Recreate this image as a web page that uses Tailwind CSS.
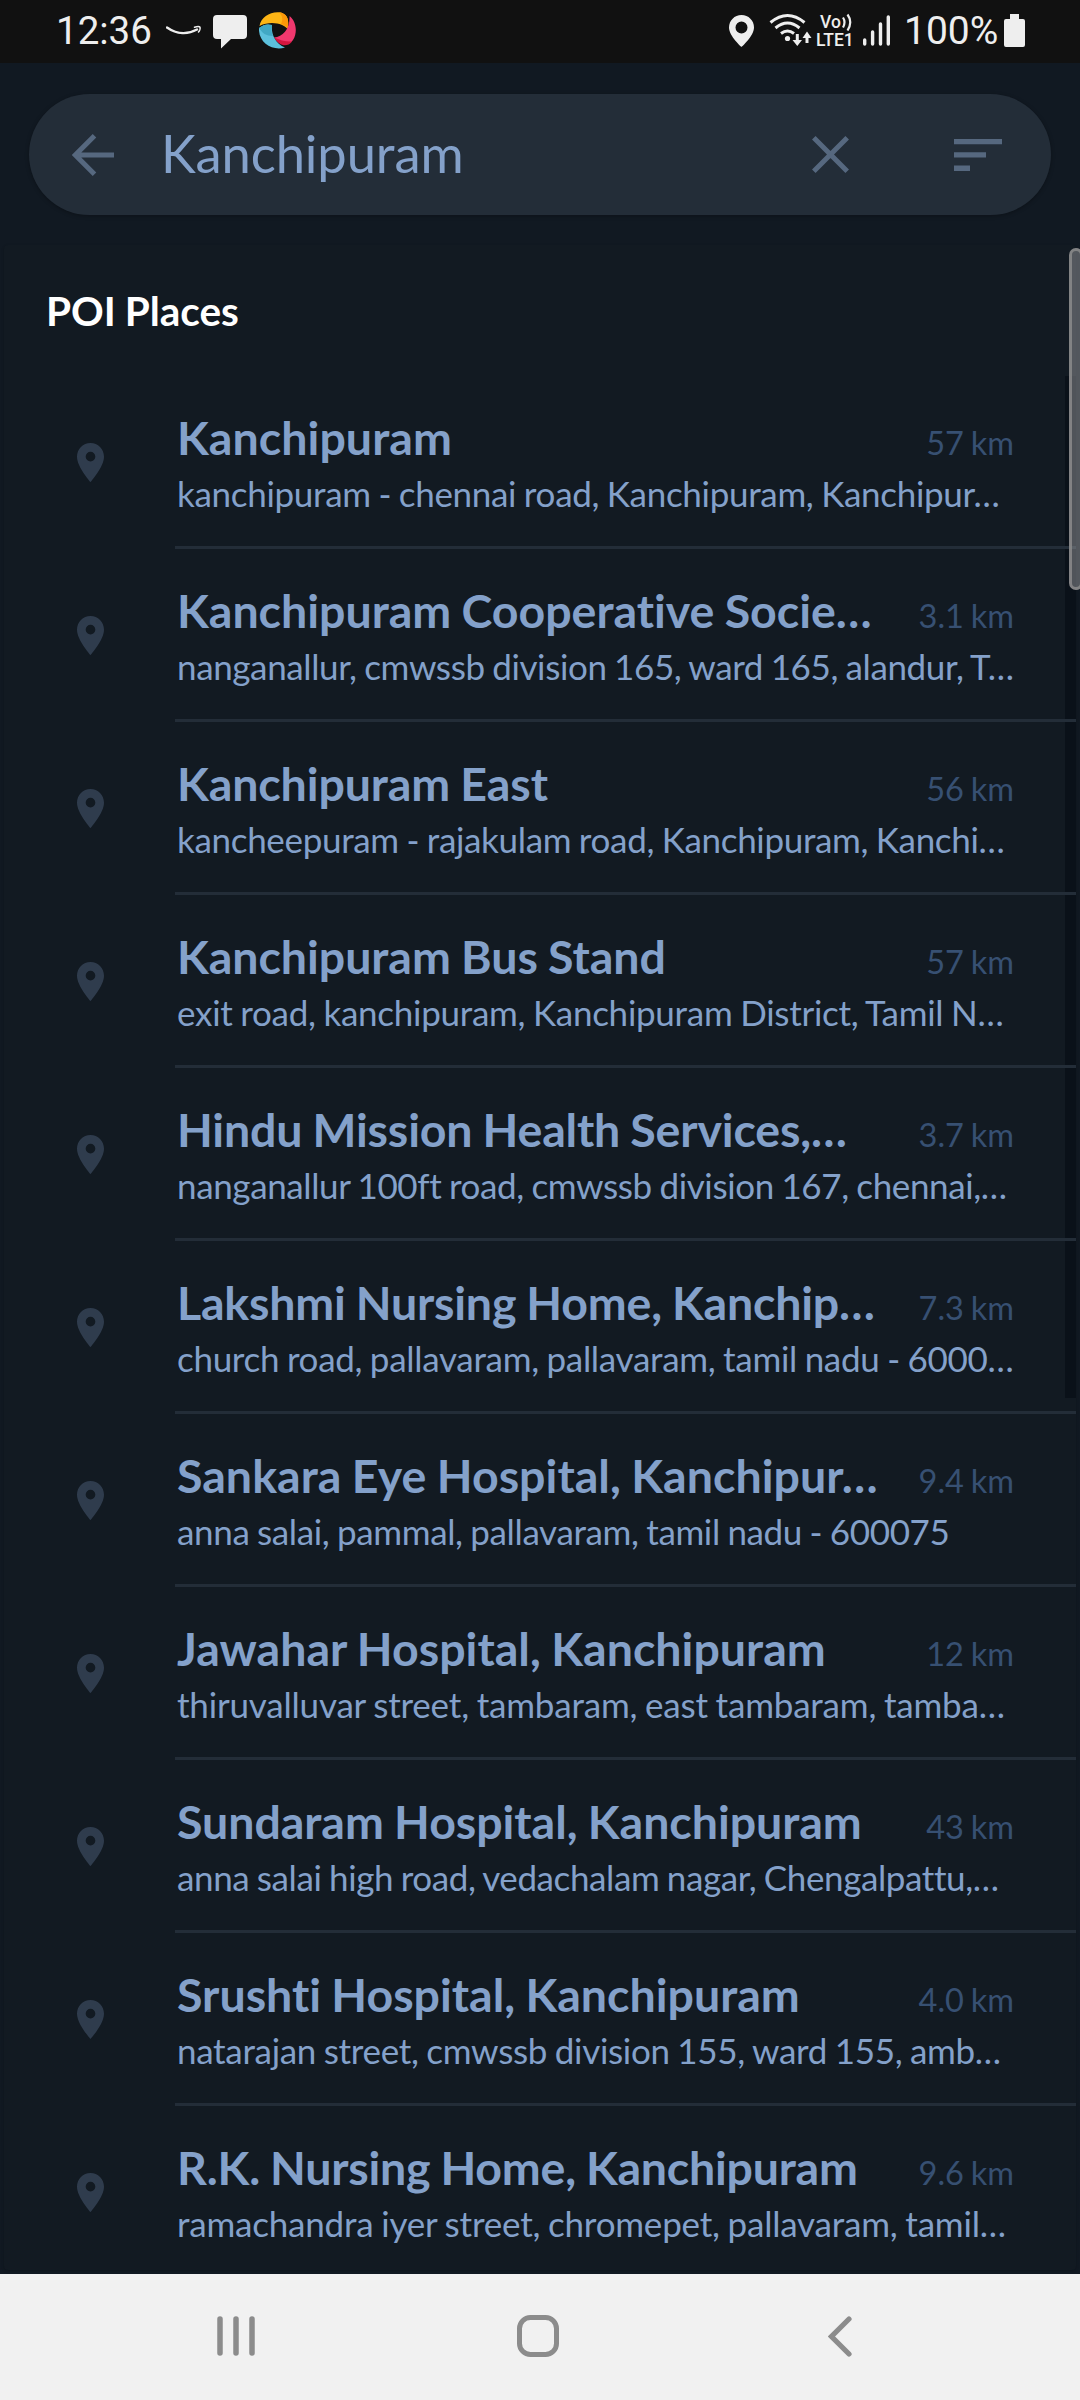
<!DOCTYPE html>
<html lang="en">
<head>
<meta charset="utf-8">
<title>Search places</title>
<script src="https://cdn.jsdelivr.net/npm/@tailwindcss/browser@4"></script>
</head>
<body class="w-[1080px] h-[2400px] overflow-hidden flex flex-col bg-[#111922] font-['Lato',sans-serif] [font-variant-ligatures:none]">

<!-- Status bar -->
<header class="h-[63px] shrink-0 bg-[#111111] text-[#eeeeee] flex items-center justify-between pl-[56px] pr-[55px] font-['Roboto',sans-serif]">
  <div class="flex items-center h-full">
    <span class="w-[110px] text-[38.5px] leading-none whitespace-nowrap">12:36</span>
    <svg class="w-[36px] h-[14px] mb-[2px]" viewBox="166 24 36 14" fill="none" stroke="#eeeeee"><path d="M167 27.5C177 34.5 188 34.5 197 29.5" stroke-width="2.4" stroke-linecap="round"/><path d="M194.500 27.200C197 26.500 199.500 26.500 200 27.200C200.500 28.500 199.500 31 198.500 32" stroke-width="1.500" stroke-linecap="round"/></svg>
    <svg class="w-[34px] h-[34px] ml-[11px]" viewBox="0 0 34 34" fill="#eeeeee"><path d="M4 0H30Q34 0 34 4V20Q34 24 30 24H18L8 33.500V24H4Q0 24 0 20V4Q0 0 4 0Z"/></svg>
    <svg class="w-[38px] h-[38px] ml-[12px] mb-[2px]" viewBox="259 12 38 38"><path d="M259.500 26C261 17 270 11.500 279 12.200C286 13 290 18 287.500 29C284 24.500 272 20 259.500 26Z" fill="#fdb515"/><path d="M279 12.200C286 13 290 18 287.500 29C286 26 284 25 281 24C283 20 283 16 279 12.200Z" fill="#fb9708"/><path d="M289.500 16C296 21 298 32 293 40C288 47 281 45 274 37.500C283 37 290 29 289.500 16Z" fill="#f0386e"/><path d="M274 37.500C280 40 286 42 292 41.500C287 48 279 46 274 37.500Z" fill="#d4163f"/><path d="M259 28C264 24 268 24 272 25C271 34 275 43 285 47.500C273 51.500 258 43 259 28Z" fill="#5cc0dc"/><path d="M259 28C264 24 268 24 272 25C271 30 272 34 273 36C266 36 262 33 259 28Z" fill="#41a8c4"/></svg>
  </div>
  <div class="flex items-center h-full">
    <svg class="w-[25px] h-[32px] mb-[2px]" viewBox="0 0 25 32" fill="#eeeeee" fill-rule="evenodd"><path d="M12.500 0C5.500 0 0 5.500 0 12.500C0 21 12.500 32 12.500 32S25 21 25 12.500C25 5.500 19.500 0 12.500 0ZM12.500 6.500A6 6 0 1 1 12.500 18.500A6 6 0 1 1 12.500 6.500Z"/></svg>
    <svg class="w-[43px] h-[34px] ml-[15px] mb-[4px]" viewBox="768 12 43 34" fill="none" stroke="#eeeeee" stroke-width="3"><path d="M769.500 21.500Q786.500 7.500 803.500 21.500"/><path d="M774.500 27Q786.500 17 798.500 27"/><path d="M780 32.500Q786.500 27.500 793 32.500"/><circle cx="786.500" cy="37.500" r="2.600" fill="#eeeeee" stroke="none"/><path d="M796.300 33V42M806 42V34"/><path d="M791.500 39H801L796.300 45Z M801.500 37H810.500L806 30.500Z" fill="#eeeeee" stroke="none"/></svg>
    <div class="w-[40px] ml-[4px] mb-[1px] flex flex-col text-[17.5px] leading-[18px] font-medium">
      <span class="flex h-[18px] pl-[4px]">Vo<svg class="w-[12px] h-[18px]" viewBox="0 0 12 18" fill="none" stroke="#eeeeee" stroke-width="2.200"><path d="M2 4.500Q5 9 2 14.500M6.500 1.500Q12 9 6.500 17.500"/></svg></span>
      <span class="whitespace-nowrap">LTE1</span>
    </div>
    <svg class="w-[27px] h-[31px] ml-[7px] mb-[2px]" viewBox="0 0 27 31" stroke="#eeeeee" stroke-width="3.400" stroke-linecap="round"><path d="M1.700 25V29M9.600 17V29M17.500 9V29M25.300 2V29"/></svg>
    <span class="text-[39px] leading-none ml-[14px] w-[95px] whitespace-nowrap">100%</span>
    <svg class="w-[21px] h-[33px] ml-[5px] mb-[2px]" viewBox="0 0 21 33" fill="#eeeeee"><path d="M6 0H15V5H19Q21 5 21 7V31Q21 33 19 33H2Q0 33 0 31V7Q0 5 2 5H6Z"/></svg>
  </div>
</header>

<!-- Search field -->
<div class="mt-[31px] mx-[29px] h-[121px] shrink-0 rounded-full bg-[#232d38] shadow-[0_1px_4px_rgba(0,0,0,0.3)] flex items-center pl-[43px] pr-[49px]">
  <svg class="w-[42px] h-[42px]" viewBox="0 0 42 42" fill="none" stroke="#56687f" stroke-width="5"><path d="M42 21H4M22.500 1.800L3.300 21L22.500 40.200"/></svg>
  <span class="ml-[47px] flex-1 pb-[3px] text-[52.5px] leading-[64px] tracking-[-0.1px] text-[#84a1ca]">Kanchipuram</span>
  <svg class="w-[37px] h-[37px]" viewBox="0 0 37 37" stroke="#56687f" stroke-width="5"><path d="M1.800 1.800L35.200 35.200M35.200 1.800L1.800 35.200"/></svg>
  <svg class="w-[48px] h-[32px] ml-[105px]" viewBox="0 0 48 32" fill="#56687f"><path d="M0 0H48V5.300H0ZM0 13.300H32V18.600H0ZM0 26.600H16V32H0Z"/></svg>
</div>

<!-- Results -->
<main class="relative mt-[30px] mx-1 h-[2025px] shrink-0 rounded-[4px] bg-[#121a22] shadow-[0_1px_3px_rgba(0,0,0,0.2)]">
  <div class="absolute right-0 top-[131px] w-[11px] h-[1022px] bg-[#0a1119]"></div>
  <h1 class="h-[131px] pl-[42px] pt-[41px] text-[40.5px] leading-[49px] [word-spacing:-1px] font-bold text-white">POI Places</h1>
  <ul id="results" class="relative"></ul>
  <div class="absolute -right-[7px] top-[3px] w-[14px] h-[342px] rounded-[7px] border-[3px] border-[#888888]/90 bg-[#8b8d90]/55"></div>
</main>

<!-- Navigation bar -->
<nav class="mt-auto h-[126px] shrink-0 bg-[#f1f1f1] relative z-10 flex items-center pl-[217px] pr-[228px] pb-[2px] justify-between">
  <svg class="w-[38px] h-[40px]" viewBox="0 0 38 40" stroke="#8c8c8c" stroke-width="5.500" stroke-linecap="round"><path d="M3 3V37M19 3V37M35 3V37"/></svg>
  <svg class="w-[42px] h-[42px] ml-[-7px]" viewBox="0 0 42 42" fill="none" stroke="#8c8c8c" stroke-width="5"><rect x="2.500" y="2.500" width="37" height="37" rx="11"/></svg>
  <svg class="w-[24px] h-[41px]" viewBox="0 0 24 41" fill="none" stroke="#8c8c8c" stroke-width="5.200" stroke-linecap="round"><path d="M21 3L3.500 20.500L21 38"/></svg>
</nav>

<script>
// name, name width, distance, address, address width
const places = [
  ["Kanchipuram", 275, "57 km", "kanchipuram - chennai road, Kanchipuram, Kanchipur…", 823],
  ["Kanchipuram Cooperative Socie…", 695, "3.1 km", "nanganallur, cmwssb division 165, ward 165, alandur, T…", 839],
  ["Kanchipuram East", 371, "56 km", "kancheepuram - rajakulam road, Kanchipuram, Kanchi…", 828],
  ["Kanchipuram Bus Stand", 489, "57 km", "exit road, kanchipuram, Kanchipuram District, Tamil N…", 828],
  ["Hindu Mission Health Services,…", 670, "3.7 km", "nanganallur 100ft road, cmwssb division 167, chennai,…", 831],
  ["Lakshmi Nursing Home, Kanchip…", 698, "7.3 km", "church road, pallavaram, pallavaram, tamil nadu - 6000…", 837],
  ["Sankara Eye Hospital, Kanchipur…", 701, "9.4 km", "anna salai, pammal, pallavaram, tamil nadu - 600075", 773],
  ["Jawahar Hospital, Kanchipuram", 650, "12 km", "thiruvalluvar street, tambaram, east tambaram, tamba…", 829],
  ["Sundaram Hospital, Kanchipuram", 685, "43 km", "anna salai high road, vedachalam nagar, Chengalpattu,…", 823],
  ["Srushti Hospital, Kanchipuram", 623, "4.0 km", "natarajan street, cmwssb division 155, ward 155, amb…", 825],
  ["R.K. Nursing Home, Kanchipuram", 681, "9.6 km", "ramachandra iyer street, chromepet, pallavaram, tamil…", 830],
];
// Letter spacing that brings a line of text to a given width
const ctx = document.createElement("canvas").getContext("2d");
const tracking = (text, width, font, wordSpacing) => {
  ctx.font = font;
  ctx.letterSpacing = "0.01px";
  ctx.wordSpacing = wordSpacing + "px";
  return ((width - ctx.measureText(text).width) / text.length).toFixed(3);
};
document.getElementById("results").innerHTML = places.map(([name, nameWidth, dist, addr, addrWidth], i) => `
  <li class="h-[173px] flex">
    <svg class="w-[27px] h-[39px] ml-[73px] mt-[67px] shrink-0" viewBox="5 2 14 20" preserveAspectRatio="none" fill="#2f3c4d"><path d="M12 2C8.130 2 5 5.130 5 9c0 5.250 7 13 7 13s7-7.750 7-13c0-3.870-3.130-7-7-7zm0 9.500a2.500 2.500 0 0 1 0-5 2.500 2.500 0 0 1 0 5z"/></svg>
    <div class="ml-[71px] flex-1 flex flex-col pt-[33px] pl-[2px] ${i < 10 ? "border-b-[3px] border-[#232d38]" : ""}">
      <div class="flex justify-between items-baseline h-[59px] pr-[62px] leading-[56px] whitespace-nowrap">
        <span class="text-[46.5px] [word-spacing:-1px] font-bold text-[#84a1ca]" style="letter-spacing:${tracking(name, nameWidth, "bold 46.5px Lato", -1)}px">${name}</span>
        <span class="text-[32.5px] [word-spacing:-1.5px] text-[#375072]">${dist}</span>
      </div>
      <p class="text-[35px] [word-spacing:-1px] leading-[50px] text-[#84a1ca] whitespace-nowrap" style="letter-spacing:${tracking(addr, addrWidth, "35px Lato", -1)}px">${addr}</p>
    </div>
  </li>`).join("");
</script>
</body>
</html>
